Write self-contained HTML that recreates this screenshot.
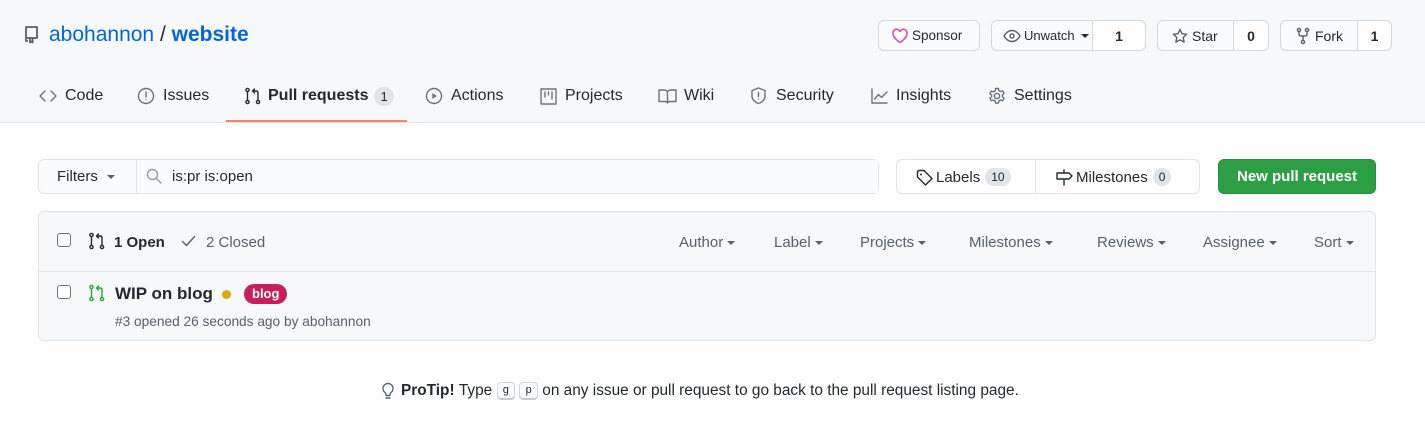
<!DOCTYPE html>
<html><head><meta charset="utf-8"><style>
*{box-sizing:border-box;margin:0;padding:0}
body{width:1425px;height:432px;background:#fff;font-family:"Liberation Sans",sans-serif;color:#24292e;position:relative;overflow:hidden}
.a{position:absolute}
.hdr{left:0;top:0;width:1425px;height:123px;background:#f6f8fa;border-bottom:1px solid #e1e4e8}
.btn{position:absolute;height:31px;border:1px solid #d5d8dc;border-radius:6px;background:#fafbfc;font-size:14px;font-weight:normal;display:flex;align-items:center}
.btn .c{position:absolute;top:0;height:29px;background:#fff;border-left:1px solid #d5d8dc;display:flex;align-items:center;justify-content:center;border-radius:0 6px 6px 0;font-weight:bold}
.nav{position:absolute;top:86px;font-size:16px;display:flex;align-items:center;height:20px;color:#24292e}
svg{display:block}
.ic{fill:none;stroke:#6a737d;stroke-width:1.4;stroke-linecap:round;stroke-linejoin:round}
.cnt{display:inline-block;background:#e1e4e8;border-radius:10px;font-size:12px;padding:2px 6px;font-weight:500;color:#24292e}
.f{position:absolute;top:234px;font-size:15px;color:#586069}
.car{display:inline-block;width:0;height:0;border-left:4px solid transparent;border-right:4px solid transparent;border-top:4px solid #586069;vertical-align:middle;margin-left:4px}
.cb{position:absolute;width:14px;height:14px;border:1px solid #767676;border-radius:3px;background:#fff}
kbd{display:inline-block;font-family:"Liberation Mono",monospace;font-size:11px;border:1px solid #d1d5da;border-bottom-color:#c6cbd1;border-radius:4px;background:#fafbfc;padding:2px 5px;box-shadow:inset 0 -1px 0 #c6cbd1;line-height:12px;vertical-align:middle}
</style></head><body>
<div class="a hdr"></div>
<svg class="a" style="left:23px;top:25px" width="17" height="19" viewBox="0 0 17 19"><path d="M3 2h11v11H3zM3 13v3h2M7 13v4.5l1.3-1 1.3 1V13" fill="none" stroke="#586069" stroke-width="1.8" stroke-linejoin="round"/></svg>
<div class="a" style="left:49px;top:23px;font-size:21px;color:#0366d6">abohannon <span style="color:#24292e">/</span> <b>website</b></div>
<div class="btn" style="left:878px;top:20px;width:102px;padding-left:12px"><svg width="18" height="16" viewBox="0 0 18 16"><path d="M9 14.5S2 10 2 5.5A3.5 3.5 0 0 1 9 4a3.5 3.5 0 0 1 7 1.5C16 10 9 14.5 9 14.5z" fill="none" stroke="#ea4aaa" stroke-width="1.6"/></svg><span style="margin-left:3px;font-size:13.5px">Sponsor</span></div>
<div class="btn" style="left:991px;top:20px;width:155px;padding-left:11px"><svg width="18" height="14" viewBox="0 0 18 14"><path d="M1 7s3-5.5 8-5.5S17 7 17 7s-3 5.5-8 5.5S1 7 1 7z" class="ic" style="stroke:#586069"/><circle cx="9" cy="7" r="2" class="ic" style="stroke:#586069"/></svg><span style="margin-left:3px;font-size:13px">Unwatch</span><span class="car" style="margin-left:6px;border-top-color:#24292e"></span><div class="c" style="left:100px;width:53px">1</div></div>
<div class="btn" style="left:1157px;top:20px;width:112px;padding-left:14px"><svg width="16" height="16" viewBox="0 0 16 16"><path d="M8 1.5l2 4.2 4.6.6-3.4 3.2.9 4.6L8 11.8l-4.1 2.3.9-4.6L1.4 6.3 6 5.7z" class="ic" style="stroke:#586069"/></svg><span style="margin-left:4px">Star</span><div class="c" style="left:75px;width:35px">0</div></div>
<div class="btn" style="left:1280px;top:20px;width:112px;padding-left:15px"><svg width="14" height="18" viewBox="0 0 14 18"><circle cx="3" cy="3" r="1.6" class="ic" style="stroke:#586069"/><circle cx="11" cy="3" r="1.6" class="ic" style="stroke:#586069"/><circle cx="7" cy="15" r="1.6" class="ic" style="stroke:#586069"/><path d="M3 4.6v2.4c0 1.5 1 2 2 2h4c1 0 2-.5 2-2V4.6M7 9v4.4" class="ic" style="stroke:#586069"/></svg><span style="margin-left:5px">Fork</span><div class="c" style="left:76px;width:34px">1</div></div>
<div class="nav" style="left:39px"><svg width="18" height="14" viewBox="0 0 18 14"><path d="M6 2L1 7l5 5M12 2l5 5-5 5" class="ic"/></svg><span style="margin-left:8px">Code</span></div>
<div class="nav" style="left:137px"><svg width="18" height="18" viewBox="0 0 18 18"><circle cx="9" cy="9" r="7.5" class="ic"/><path d="M9 5v5" class="ic"/><circle cx="9" cy="12.6" r=".6" fill="#6a737d"/></svg><span style="margin-left:8px">Issues</span></div>
<div class="nav" style="left:244px;font-weight:700"><svg width="18" height="18" viewBox="0 0 18 18"><circle cx="3.5" cy="3" r="1.6" class="ic" style="stroke:#24292e"/><circle cx="3.5" cy="15" r="1.6" class="ic" style="stroke:#24292e"/><circle cx="14" cy="15" r="1.6" class="ic" style="stroke:#24292e"/><path d="M3.5 4.6v8.8M14 13.4V6c0-1.5-1-2-2-2H8.5M10.5 2L8.5 4l2 2" class="ic" style="stroke:#24292e"/></svg><span style="margin-left:6px">Pull requests</span><span class="cnt" style="margin-left:6px;font-size:13px">1</span></div>
<div class="a" style="left:226px;top:120px;width:181px;height:2px;background:#f9826c"></div>
<div class="nav" style="left:425px"><svg width="18" height="18" viewBox="0 0 18 18"><circle cx="9" cy="9" r="7.5" class="ic"/><path d="M7.3 6v6l4.5-3z" fill="#6a737d"/></svg><span style="margin-left:8px">Actions</span></div>
<div class="nav" style="left:540px"><svg width="17" height="17" viewBox="0 0 17 17"><rect x="1" y="1" width="15" height="15" class="ic"/><path d="M5 4v5M8.5 4v3M12 4v7" class="ic"/></svg><span style="margin-left:8px">Projects</span></div>
<div class="nav" style="left:658px"><svg width="19" height="16" viewBox="0 0 19 16"><path d="M1 2h5c2 0 3.5 1 3.5 2.5V15C9.5 14 8 13.5 6.5 13.5H1zM18 2h-5c-2 0-3.5 1-3.5 2.5V15c0-1 1.5-1.5 3-1.5H18z" class="ic"/></svg><span style="margin-left:7px">Wiki</span></div>
<div class="nav" style="left:750px"><svg width="17" height="18" viewBox="0 0 17 18"><path d="M8.5 1L2 3.5V9c0 4 3.5 6.5 6.5 7.5 3-1 6.5-3.5 6.5-7.5V3.5z" class="ic"/><path d="M8.5 5.5v4" class="ic"/><circle cx="8.5" cy="12" r=".6" fill="#6a737d"/></svg><span style="margin-left:9px">Security</span></div>
<div class="nav" style="left:871px"><svg width="17" height="16" viewBox="0 0 17 16"><path d="M1 1v14h15M3.5 11l4-4.5 3 3L16 4" class="ic"/></svg><span style="margin-left:8px">Insights</span></div>
<div class="nav" style="left:988px"><svg width="18" height="18" viewBox="0 0 18 18"><circle cx="9" cy="9" r="2.6" class="ic"/><path d="M7.6 1.5h2.8l.5 2.2 1.6.9 2.2-.7 1.4 2.4-1.7 1.6v1.8l1.7 1.6-1.4 2.4-2.2-.7-1.6.9-.5 2.2H7.6l-.5-2.2-1.6-.9-2.2.7-1.4-2.4 1.7-1.6V8.1L1.9 6.5l1.4-2.4 2.2.7 1.6-.9z" class="ic"/></svg><span style="margin-left:8px">Settings</span></div>
<div class="a" style="left:38px;top:159px;width:841px;height:35px;border:1px solid #e1e4e8;border-radius:6px;background:#fafbfc"></div>
<div class="a" style="left:136px;top:160px;width:742px;height:33px;background:#fafbfc;border-left:1px solid #e1e4e8"></div>
<div class="a" style="left:57px;top:168px;font-size:15px;font-weight:500">Filters<span class="car" style="margin-left:9px"></span></div>
<svg class="a" style="left:146px;top:168px" width="16" height="16" viewBox="0 0 16 16"><circle cx="6.5" cy="6.5" r="5" class="ic" style="stroke:#959da5"/><path d="M10.2 10.2L15 15" class="ic" style="stroke:#959da5"/></svg>
<div class="a" style="left:172px;top:168px;font-size:15px;color:#24292e">is:pr is:open</div>
<div class="a" style="left:896px;top:159px;width:304px;height:35px;border:1px solid #e1e4e8;border-radius:6px;background:#fff"></div>
<div class="a" style="left:1035px;top:160px;width:1px;height:33px;background:#e1e4e8"></div>
<div class="a" style="left:916px;top:168px;font-size:15px;font-weight:500;display:flex;align-items:center"><svg width="17" height="17" viewBox="0 0 17 17"><path d="M1.5 2.5v5.5l8 8 6.5-6.5-8-8H2.5z" class="ic" style="stroke:#24292e"/><circle cx="5" cy="5.5" r="1" fill="#24292e"/></svg><span style="margin-left:3px">Labels</span><span class="cnt" style="margin-left:5px">10</span></div>
<div class="a" style="left:1055px;top:168px;font-size:15px;font-weight:500;display:flex;align-items:center"><svg width="18" height="17" viewBox="0 0 18 17"><path d="M9 1v3M9 10v6M2 4h12l3 3-3 3H2z" class="ic" style="stroke:#24292e"/></svg><span style="margin-left:3px">Milestones</span><span class="cnt" style="margin-left:5px">0</span></div>
<div class="a" style="left:1218px;top:159px;width:158px;height:35px;border-radius:6px;background:#2c9f45;border:1px solid #27903e;color:#fff;font-size:15px;font-weight:700;display:flex;align-items:center;justify-content:center">New pull request</div>
<div class="a" style="left:38px;top:211px;width:1338px;height:130px;border:1px solid #e1e4e8;border-radius:6px;background:#f6f8fa"></div>
<div class="a" style="left:39px;top:271px;width:1336px;height:1px;background:#e1e4e8"></div>
<div class="cb" style="left:57px;top:233px"></div>
<svg class="a" style="left:88px;top:232px" width="18" height="18" viewBox="0 0 18 18"><circle cx="3.5" cy="3" r="1.6" class="ic" style="stroke:#24292e"/><circle cx="3.5" cy="15" r="1.6" class="ic" style="stroke:#24292e"/><circle cx="14" cy="15" r="1.6" class="ic" style="stroke:#24292e"/><path d="M3.5 4.6v8.8M14 13.4V6c0-1.5-1-2-2-2H8.5M10.5 2L8.5 4l2 2" class="ic" style="stroke:#24292e"/></svg>
<div class="a" style="left:114px;top:234px;font-size:15px;font-weight:700">1 Open</div>
<svg class="a" style="left:181px;top:235px" width="15" height="12" viewBox="0 0 15 12"><path d="M1.5 6.5l4 4 8-9" class="ic" style="stroke:#586069"/></svg>
<div class="a" style="left:206px;top:234px;font-size:15px;color:#586069">2 Closed</div>
<div class="f" style="left:679px">Author<span class="car"></span></div>
<div class="f" style="left:774px">Label<span class="car"></span></div>
<div class="f" style="left:860px">Projects<span class="car"></span></div>
<div class="f" style="left:969px">Milestones<span class="car"></span></div>
<div class="f" style="left:1097px">Reviews<span class="car"></span></div>
<div class="f" style="left:1203px">Assignee<span class="car"></span></div>
<div class="f" style="left:1314px">Sort<span class="car"></span></div>
<div class="cb" style="left:57px;top:285px"></div>
<svg class="a" style="left:88px;top:284px" width="18" height="18" viewBox="0 0 18 18"><circle cx="3.5" cy="3" r="1.6" class="ic" style="stroke:#28a745"/><circle cx="3.5" cy="15" r="1.6" class="ic" style="stroke:#28a745"/><circle cx="14" cy="15" r="1.6" class="ic" style="stroke:#28a745"/><path d="M3.5 4.6v8.8M14 13.4V6c0-1.5-1-2-2-2H8.5M10.5 2L8.5 4l2 2" class="ic" style="stroke:#28a745"/></svg>
<div class="a" style="left:115px;top:284px;font-size:17px;font-weight:700">WIP on blog</div>
<div class="a" style="left:222px;top:290px;width:9px;height:9px;border-radius:50%;background:#dbab09"></div>
<div class="a" style="left:244px;top:284px;height:20px;padding:0 8px;border-radius:10px;background:#c81e5b;color:#fff;font-size:13px;font-weight:700;line-height:20px">blog</div>
<div class="a" style="left:115px;top:314px;font-size:13.7px;color:#586069">#3 opened 26 seconds ago by abohannon</div>
<div class="a" style="left:381px;top:382px;font-size:15.4px;color:#24292e;display:flex;align-items:center;white-space:nowrap"><svg width="14" height="18" viewBox="0 0 14 18"><path d="M7 1.5a5 5 0 0 0-3 9c.6.6 1 1.2 1 2v1h4v-1c0-.8.4-1.4 1-2a5 5 0 0 0-3-9zM5 16h4" class="ic" style="stroke:#586069"/></svg><b style="margin-left:6px">ProTip!</b>&nbsp;Type&nbsp;<kbd>g</kbd>&nbsp;<kbd>p</kbd>&nbsp;on any issue or pull request to go back to the pull request listing page.</div>
</body></html>
